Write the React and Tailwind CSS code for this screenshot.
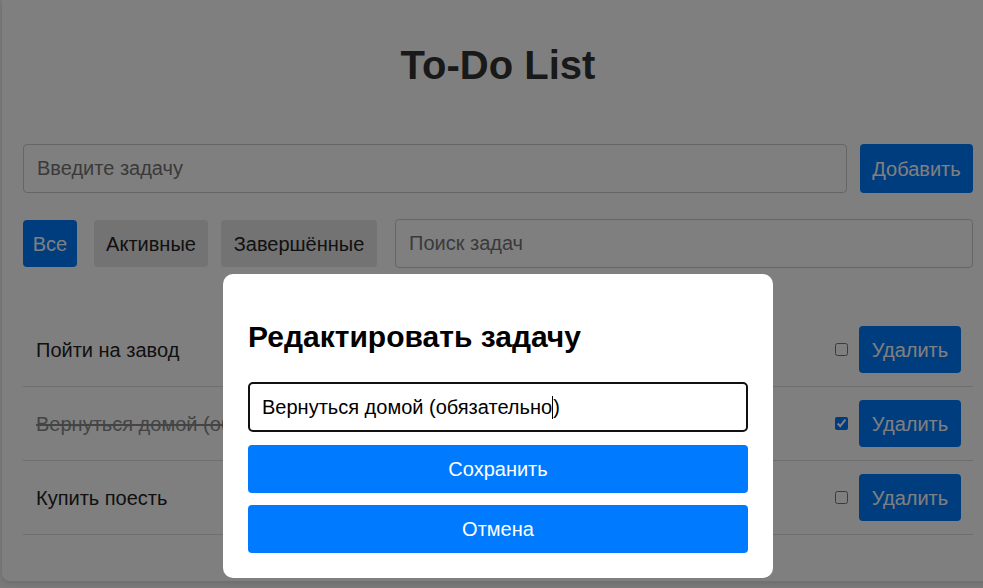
import React from "react";

const font = { fontFamily: '"Liberation Sans", Arial, sans-serif' };

function Row({ text, done }) {
  return (
    <li className="flex h-[74px] items-center border-b border-[#dddddd] pl-[13px] pr-[12px]">
      <span className={done ? "flex-1 text-[20px] text-[#888888] line-through" : "flex-1 text-[20px] text-[#222222]"}>
        {text}
      </span>
      <input type="checkbox" defaultChecked={done} className="m-0 mr-[11px] h-[13px] w-[13px]" />
      <button className="h-[47px] w-[102px] rounded-[4px] bg-[#007bff] text-[20px] text-white">Удалить</button>
    </li>
  );
}

export default function App() {
  return (
    <div style={font} className="relative h-[588px] w-[983px] overflow-hidden bg-[#f4f4f4]">
      <div className="ml-[2px] w-[1000px] rounded-b-[8px] bg-white pb-[46px] pl-[21px] pt-[42px] shadow-[0_2px_6px_rgba(0,0,0,0.12)]">
        <div className="w-[950px]">
          <h1 className="m-0 text-center text-[40px] font-bold leading-[46px] text-[#333333]">To-Do List</h1>
          <div className="mt-[56px] flex h-[49px] gap-[13px]">
            <input
              placeholder="Введите задачу"
              className="h-[49px] flex-1 rounded-[4px] border border-[#cccccc] px-[13px] text-[20px] text-[#333] placeholder:text-[#757575] outline-none"
            />
            <button className="h-[49px] w-[113px] rounded-[4px] bg-[#007bff] text-[20px] text-white">Добавить</button>
          </div>
          <div className="mt-[26px] flex h-[49px] items-center">
            <button className="mr-[17px] h-[47px] w-[54px] rounded-[4px] bg-[#007bff] text-[20px] text-white">Все</button>
            <button className="mr-[13px] h-[47px] w-[114px] rounded-[4px] bg-[#e6e6e6] text-[20px] text-[#222]">Активные</button>
            <button className="mr-[18px] h-[47px] w-[156px] rounded-[4px] bg-[#e6e6e6] text-[20px] text-[#222]">Завершённые</button>
            <input
              placeholder="Поиск задач"
              className="h-[49px] flex-1 rounded-[4px] border border-[#cccccc] px-[13px] text-[20px] text-[#333] placeholder:text-[#757575] outline-none"
            />
          </div>
          <ul className="mt-[45px]">
            <Row text="Пойти на завод" />
            <Row text="Вернуться домой (обязательно)" done />
            <Row text="Купить поесть" />
          </ul>
        </div>
      </div>

      <div className="absolute inset-0 bg-black/50">
        <div className="absolute left-[223px] top-[274px] w-[550px] rounded-[10px] bg-white p-[25px]">
          <h2 className="mb-[28px] mt-[21px] text-[30px] font-bold leading-[34px] text-black">Редактировать задачу</h2>
          <div className="flex h-[50px] items-center rounded-[5px] border-2 border-[#101010] px-[12px] text-[20px] text-black">
            <span>Вернуться домой (обязательно</span>
            <span className="inline-block h-[23px] w-px bg-black"></span>
            <span>)</span>
          </div>
          <button className="mt-[13px] h-[48px] w-full rounded-[4px] bg-[#007bff] text-[20px] text-white">Сохранить</button>
          <button className="mt-[12px] h-[48px] w-full rounded-[4px] bg-[#007bff] text-[20px] text-white">Отмена</button>
        </div>
      </div>
    </div>
  );
}
